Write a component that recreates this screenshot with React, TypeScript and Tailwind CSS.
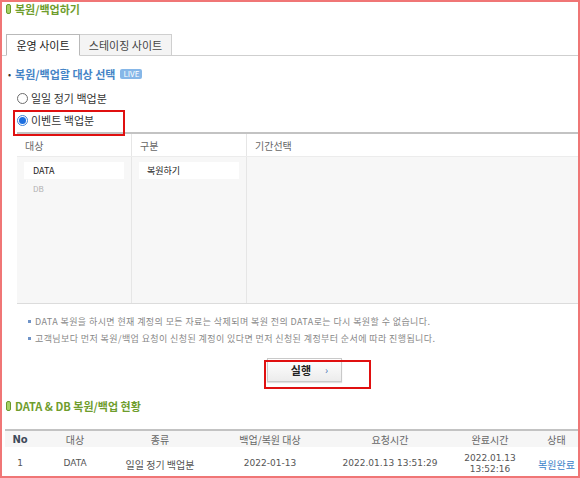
import React from 'react';

const KR = "font-['Noto_Sans_CJK_KR','Noto_Sans',sans-serif]";
const DJ = "font-['DejaVu_Sans','Noto_Sans_CJK_KR',sans-serif]";

function GreenMark() {
  return <span className="inline-block h-[10px] w-[5px] rounded-[2px] border border-[#6a9a2c] bg-[#a6d166]" />;
}

function Radio({ checked, label }: { checked?: boolean; label: string }) {
  return (
    <div className="flex h-[14px] items-center gap-[3px] pl-[15px]">
      <span
        className={`flex h-[11px] w-[11px] items-center justify-center rounded-full border bg-white ${
          checked ? 'border-[#3f82d8]' : 'border-[#6d6d6d]'
        }`}
      >
        {checked && <span className="h-[7px] w-[7px] rounded-full bg-[#1d6fe0]" />}
      </span>
      <span className="text-[11px] leading-none text-[#333]">{label}</span>
    </div>
  );
}

const HISTORY_COLS = ['w-[30px]', 'w-[80px]', 'w-[90px]', 'w-[130px]', 'w-[110px]', 'w-[90px]', 'w-[43px]'];

export default function App() {
  const headers = ['대상', '종류', '백업/복원 대상', '요청시간', '완료시간', '상태'];

  return (
    <div className={`relative h-[478px] w-[580px] overflow-hidden border-2 border-[#f07676] bg-white ${KR}`}>
      {/* page title */}
      <div className="flex h-[14px] items-center gap-[4px] pl-[4px]">
        <GreenMark />
        <span className="text-[11px] font-bold leading-none text-[#6f9d2d]">복원/백업하기</span>
      </div>

      {/* tabs */}
      <div className="mt-[18px] flex border-b border-[#cfcfcf] pl-[4px]">
        <div className="-mb-px flex h-[22px] w-[74px] items-center justify-center border border-b-white border-[#b9b9b9] bg-white text-[11px] text-[#222]">
          운영 사이트
        </div>
        <div className="-mb-px flex h-[22px] w-[92px] items-center justify-center border border-l-0 border-[#cfcfcf] bg-[#f4f4f4] text-[11px] text-[#444]">
          스테이징 사이트
        </div>
      </div>

      {/* target selection */}
      <div className="mt-[11px] flex h-[14px] items-center gap-[4px] pl-[6px]">
        <span className="text-[9px] leading-none text-[#333]">•</span>
        <span className="text-[11px] font-bold leading-none text-[#4584c6]">복원/백업할 대상 선택</span>
        <span className="ml-[1px] rounded-[2px] bg-[#86b7e8] px-[3px] py-[1px] text-[8px] leading-none text-white">LIVE</span>
      </div>
      <div className="mt-[10px]">
        <Radio label="일일 정기 백업분" />
      </div>
      <div className="mt-[8px]">
        <Radio checked label="이벤트 백업분" />
      </div>

      <div className="mt-[5px] ml-[15px] border-t-2 border-[#c3c3c3]">
        <div className="flex h-[23px] border-b border-[#ececec] bg-white text-[10px] text-[#666]">
          <div className="flex w-[115px] items-center border-r border-[#e6e6e6] pl-[8px]">대상</div>
          <div className="flex w-[115px] items-center border-r border-[#e6e6e6] pl-[8px]">구분</div>
          <div className="flex flex-1 items-center pl-[8px]">기간선택</div>
        </div>
        <div className="flex h-[147px] border-b border-[#dcdcdc] bg-[#f7f7f7]">
          <div className="w-[115px] border-r border-[#e6e6e6] px-[7px] pt-[5px]">
            <div className="flex h-[17px] items-center bg-white pl-[9px] text-[9px] text-[#222]">DATA</div>
            <div className="flex h-[20px] items-center pl-[9px] text-[8px] text-[#b0b0b0]">DB</div>
          </div>
          <div className="w-[115px] border-r border-[#e6e6e6] px-[7px] pt-[5px]">
            <div className="flex h-[17px] items-center bg-white pl-[8px] text-[9px] text-[#222]">복원하기</div>
          </div>
          <div className="flex-1" />
        </div>
      </div>

      {/* notes */}
      <div className="mt-[11px] ml-[26px] flex h-[13px] items-center gap-[4px] text-[9px] tracking-[0.4px] text-[#888]">
        <span className="h-[3px] w-[3px] bg-[#6f93c8]" />
        <span>DATA 복원을 하시면 현재 계정의 모든 자료는 삭제되며 복원 전의 DATA로는 다시 복원할 수 없습니다.</span>
      </div>
      <div className="mt-[4px] ml-[26px] flex h-[13px] items-center gap-[4px] text-[9px] tracking-[0.4px] text-[#888]">
        <span className="h-[3px] w-[3px] bg-[#6f93c8]" />
        <span>고객님보다 먼저 복원/백업 요청이 신청된 계정이 있다면 먼저 신청된 계정부터 순서에 따라 진행됩니다.</span>
      </div>

      {/* run button */}
      <div className="mt-[13px] ml-[265px] flex h-[24px] w-[75px] items-center justify-center gap-[14px] border border-[#c9c9c9] bg-gradient-to-b from-white to-[#ececec] pl-[10px] shadow-[0_1px_1px_rgba(0,0,0,0.12)]">
        <span className="text-[11px] font-bold leading-none text-[#222]">실행</span>
        <span className="text-[10px] leading-none text-[#4a72b8]">›</span>
      </div>

      {/* history */}
      <div className="mt-[17px] flex h-[14px] items-center gap-[4px] pl-[4px]">
        <GreenMark />
        <span className="text-[11px] font-bold leading-none text-[#6f9d2d]">DATA &amp; DB 복원/백업 현황</span>
      </div>

      <div className="mt-[16px] ml-[3px] border-t-2 border-[#c3c3c3]">
        <div className="flex h-[16px] items-center bg-[#f6f6f6] text-[10px] text-[#666]">
          <div className={`${HISTORY_COLS[0]} text-center font-bold text-[#3f4a5a] ${DJ}`}>No</div>
          {headers.map((h, i) => (
            <div key={h} className={`${HISTORY_COLS[i + 1]} text-center`}>
              {h}
            </div>
          ))}
        </div>
        <div className={`flex h-[34px] items-center text-[9px] text-[#555] ${DJ}`}>
          <div className={`${HISTORY_COLS[0]} text-center`}>1</div>
          <div className={`${HISTORY_COLS[1]} text-center`}>DATA</div>
          <div className={`${HISTORY_COLS[2]} text-center ${KR} text-[10px]`}>일일 정기 백업분</div>
          <div className={`${HISTORY_COLS[3]} text-center`}>2022-01-13</div>
          <div className={`${HISTORY_COLS[4]} text-center`}>2022.01.13 13:51:29</div>
          <div className={`${HISTORY_COLS[5]} text-center leading-[11px]`}>
            2022.01.13
            <br />
            13:52:16
          </div>
          <div className={`${HISTORY_COLS[6]} whitespace-nowrap text-center ${KR} text-[10px] text-[#3b82c9]`}>복원완료</div>
        </div>
      </div>

      {/* red annotation boxes */}
      <div className="pointer-events-none absolute left-[11px] top-[108px] h-[26px] w-[112px] border-2 border-[#e01010]" />
      <div className="pointer-events-none absolute left-[262px] top-[358px] h-[29px] w-[107px] border-2 border-[#e01010]" />
    </div>
  );
}
